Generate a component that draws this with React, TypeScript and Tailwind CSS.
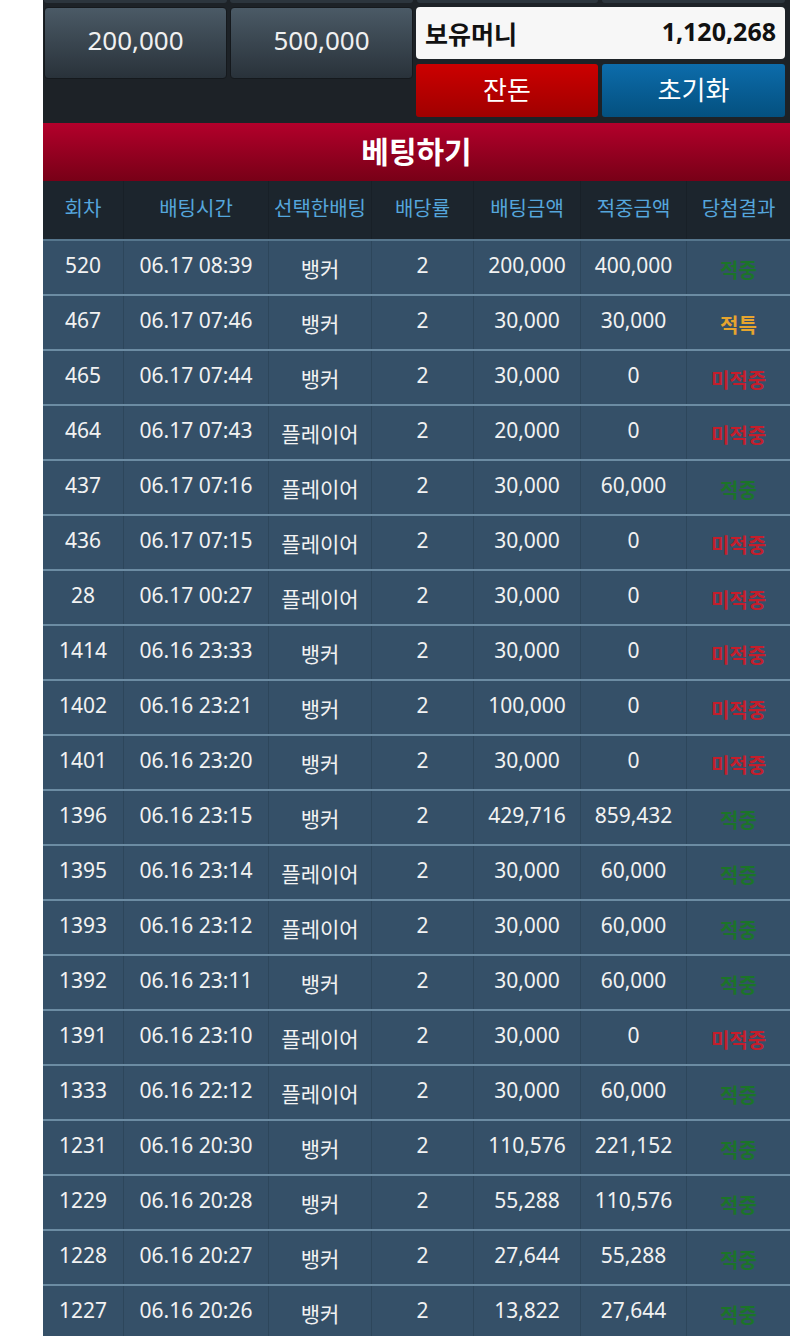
import React from "react";

type Row = [string, string, string, string, string, string, string];

const rows: Row[] = [
  ["520", "06.17 08:39", "뱅커", "2", "200,000", "400,000", "적중"],
  ["467", "06.17 07:46", "뱅커", "2", "30,000", "30,000", "적특"],
  ["465", "06.17 07:44", "뱅커", "2", "30,000", "0", "미적중"],
  ["464", "06.17 07:43", "플레이어", "2", "20,000", "0", "미적중"],
  ["437", "06.17 07:16", "플레이어", "2", "30,000", "60,000", "적중"],
  ["436", "06.17 07:15", "플레이어", "2", "30,000", "0", "미적중"],
  ["28", "06.17 00:27", "플레이어", "2", "30,000", "0", "미적중"],
  ["1414", "06.16 23:33", "뱅커", "2", "30,000", "0", "미적중"],
  ["1402", "06.16 23:21", "뱅커", "2", "100,000", "0", "미적중"],
  ["1401", "06.16 23:20", "뱅커", "2", "30,000", "0", "미적중"],
  ["1396", "06.16 23:15", "뱅커", "2", "429,716", "859,432", "적중"],
  ["1395", "06.16 23:14", "플레이어", "2", "30,000", "60,000", "적중"],
  ["1393", "06.16 23:12", "플레이어", "2", "30,000", "60,000", "적중"],
  ["1392", "06.16 23:11", "뱅커", "2", "30,000", "60,000", "적중"],
  ["1391", "06.16 23:10", "플레이어", "2", "30,000", "0", "미적중"],
  ["1333", "06.16 22:12", "플레이어", "2", "30,000", "60,000", "적중"],
  ["1231", "06.16 20:30", "뱅커", "2", "110,576", "221,152", "적중"],
  ["1229", "06.16 20:28", "뱅커", "2", "55,288", "110,576", "적중"],
  ["1228", "06.16 20:27", "뱅커", "2", "27,644", "55,288", "적중"],
  ["1227", "06.16 20:26", "뱅커", "2", "13,822", "27,644", "적중"],
];

const headers = ["회차", "배팅시간", "선택한배팅", "배당률", "배팅금액", "적중금액", "당첨결과"];

const font = { fontFamily: '"Noto Sans", "Noto Sans CJK KR", sans-serif' };

function resultClass(r: string) {
  if (r === "적중") return "text-[#1c7429] font-bold";
  if (r === "미적중") return "text-[#c41e2c] font-bold";
  return "text-[#e6a42e] font-bold";
}

const gridCols = "grid grid-cols-[80px_145px_103px_102px_107px_106px_104px]";

export default function App() {
  return (
    <div className="w-[800px] bg-white" style={font}>
      <div className="ml-[43px] w-[747px]">
        {/* top section */}
        <div className="bg-[#1d2227] pb-[6px]">
          <div className="flex h-[7px] gap-[3px] pl-[1px] pr-[5px]">
            <div className="h-[3px] w-[183px] rounded-b-[4px] bg-[#2c353d]" />
            <div className="h-[3px] w-[183px] rounded-b-[4px] bg-[#2c353d]" />
            <div className="ml-[1px] h-[3px] w-[182px] rounded-b-[4px] bg-[#2c353d]" />
            <div className="ml-[1px] h-[3px] w-[183px] rounded-b-[4px] bg-[#2c353d]" />
          </div>
          <div className="flex pl-[1px] pr-[5px]">
            <div className="flex w-[369px] items-start gap-[3px]">
              <div className="flex h-[72px] w-[183px] items-center justify-center rounded-[4px] border border-[#15191d] bg-gradient-to-b from-[#4b5a66] to-[#29323a] pb-[6px] text-[26px] text-[#f0f0f0]">
                200,000
              </div>
              <div className="flex h-[72px] w-[183px] items-center justify-center rounded-[4px] border border-[#15191d] bg-gradient-to-b from-[#4b5a66] to-[#29323a] pb-[6px] text-[26px] text-[#f0f0f0]">
                500,000
              </div>
            </div>
            <div className="ml-[3px] flex w-[369px] flex-col gap-[5px]">
              <div className="flex h-[52px] items-center justify-between rounded-[4px] bg-[#f7f7f7] px-[9px] text-[#111]">
                <span className="pt-[4px] text-[25px] font-bold">보유머니</span>
                <span className="pb-[2px] text-[25px] font-bold">1,120,268</span>
              </div>
              <div className="flex gap-[4px]">
                <div className="flex h-[53px] w-[182px] items-center justify-center rounded-[3px] bg-gradient-to-b from-[#cc0000] to-[#a00000] text-[26px] text-white">
                  잔돈
                </div>
                <div className="flex h-[53px] w-[183px] items-center justify-center rounded-[3px] bg-gradient-to-b from-[#0d6cab] to-[#04507f] text-[26px] text-white">
                  초기화
                </div>
              </div>
            </div>
          </div>
        </div>
        {/* title bar */}
        <div className="flex h-[58px] items-center justify-center bg-gradient-to-b from-[#b3002b] to-[#780017] pb-[2px] text-[30px] font-bold text-white">
          베팅하기
        </div>
        {/* table header */}
        <div className={`${gridCols} h-[60px] border-b-2 border-[#56768d] bg-[#1c252d]`}>
          {headers.map((h, i) => (
            <div
              key={h}
              className={`flex items-center justify-center pb-[2px] text-[20px] text-[#55a6dc] ${i > 0 ? "border-l border-[#182027]" : ""}`}
            >
              {h}
            </div>
          ))}
        </div>
        {/* rows */}
        {rows.map((r, ri) => (
          <div key={ri} className={`${gridCols} h-[55px] border-b-2 border-[#6c8ca3] bg-[#355068]`}>
            {r.map((c, i) => (
              <div
                key={i}
                className={`flex items-center justify-center ${i > 0 ? "border-l border-[#2d465b]" : ""} ${
                  i === 6 ? resultClass(c) + " pt-[6px] text-[20px]" : "pb-[3px] text-[21px] text-[#f2f2f2]"
                } ${i === 2 ? "!pb-0 pt-[5px]" : ""}`}
              >
                {c}
              </div>
            ))}
          </div>
        ))}
      </div>
    </div>
  );
}
